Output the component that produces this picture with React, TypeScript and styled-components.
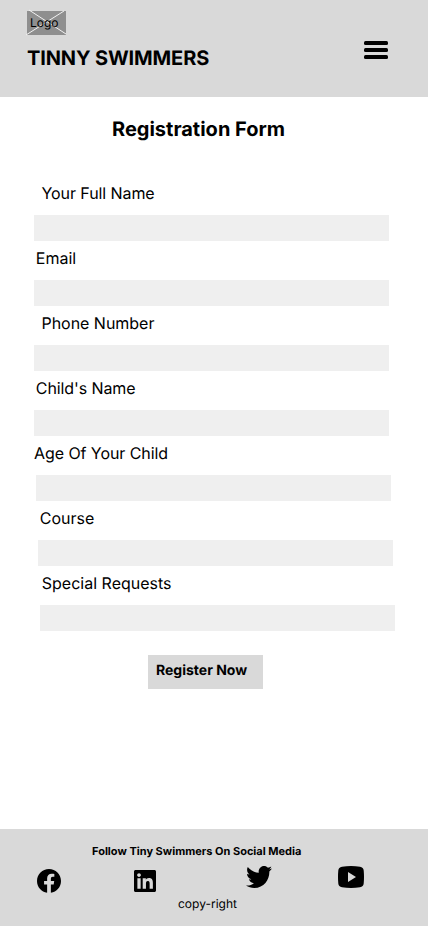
import React from "react";
import styled, { createGlobalStyle } from "styled-components";
import { FaFacebook, FaLinkedin, FaTwitter } from "react-icons/fa";

const GlobalStyle = createGlobalStyle`
  * { box-sizing: border-box; }
  body {
    margin: 0;
    background: #fff;
    color: #000;
    font-family: Inter, sans-serif;
    text-rendering: geometricPrecision;
  }
  h1, h2, p { margin: 0; }
`;

const Page = styled.div`
  width: 428px;
  height: 926px;
  display: flex;
  flex-direction: column;
  overflow: hidden;
`;

const Header = styled.header`
  height: 97px;
  flex: none;
  display: flex;
  justify-content: space-between;
  padding: 11px 40px 0 27px;
  background: #d9d9d9;
`;

const Logo = styled.div`
  position: relative;
  width: 39px;
  height: 24px;
  padding: 4px 0 0 3px;
  background: #8f8f8f;
  font-size: 12px;
  line-height: 15px;
`;

const Cross = styled.svg`
  position: absolute;
  left: -1px;
  top: -2px;
  overflow: visible;
`;

const LogoText = styled.span`
  position: relative;
`;

const Brand = styled.h1`
  margin-top: 11px;
  font-size: 20px;
  line-height: 24px;
  font-weight: 700;
  letter-spacing: -0.13px;
  white-space: nowrap;
`;

const MenuButton = styled.button`
  width: 24px;
  height: 18px;
  margin-top: 30px;
  padding: 0;
  border: 0;
  background: none;
  display: flex;
  flex-direction: column;
  justify-content: space-between;
`;

const MenuLine = styled.span`
  width: 24px;
  height: 4px;
  border-radius: 1.5px;
  background: #000;
`;

const Form = styled.form`
  flex: 1;
  display: flex;
  flex-direction: column;
  align-items: flex-start;
`;

const Title = styled.h2`
  margin: 20px 0 43px 112px;
  font-size: 20px;
  line-height: 24px;
  font-weight: 700;
`;

const Field = styled.label`
  height: 65px;
  display: flex;
  flex-direction: column;
`;

const Label = styled.span<{ $indent: number; $tracking?: number }>`
  height: 31px;
  padding-left: ${(p) => p.$indent}px;
  font-size: 16px;
  line-height: 19px;
  letter-spacing: ${(p) => p.$tracking ?? 0}px;
`;

const Input = styled.input<{ $indent: number }>`
  width: 355px;
  height: 26px;
  margin-left: ${(p) => p.$indent}px;
  padding: 0 8px;
  border: 0;
  background: #efefef;
  font: inherit;
`;

const Submit = styled.button`
  width: 115px;
  height: 34px;
  margin: 16px 0 0 148px;
  padding: 0 0 4px 8px;
  border: 0;
  background: #d9d9d9;
  color: #000;
  font: 700 14px/17px Inter, sans-serif;
  text-align: left;
  text-rendering: inherit;
`;

const Footer = styled.footer`
  height: 97px;
  flex: none;
  padding-top: 16px;
  background: #d9d9d9;
`;

const Follow = styled.p`
  padding-left: 92px;
  font-size: 11px;
  line-height: 13px;
  font-weight: 700;
`;

const Socials = styled.nav`
  height: 38px;
  display: flex;
  align-items: flex-start;
  padding: 8px 0 0 37px;
`;

const Social = styled.a<{ $gap: number; $drop: number }>`
  display: flex;
  margin: ${(p) => p.$drop}px ${(p) => p.$gap}px 0 0;
  color: #000;
`;

const Twitter = styled(FaTwitter)`
  width: 26px;
  height: 22px;
`;

const Copyright = styled.p`
  padding-left: 178px;
  font-size: 12px;
  line-height: 15px;
`;

const fields = [
  { label: "Your Full Name", labelX: 41.5, inputX: 34, tracking: -0.08 },
  { label: "Email", labelX: 35.8, inputX: 34 },
  { label: "Phone Number", labelX: 41.5, inputX: 34, tracking: -0.03 },
  { label: "Child's Name", labelX: 35.8, inputX: 34, tracking: -0.09 },
  { label: "Age Of Your Child", labelX: 34, inputX: 36, tracking: -0.07 },
  { label: "Course", labelX: 39.8, inputX: 38 },
  { label: "Special Requests", labelX: 41.8, inputX: 40 },
];

export default function App() {
  return (
    <Page>
      <GlobalStyle />
      <Header>
        <div>
          <Logo>
            <Cross width="41" height="27" stroke="#f2f2f2" strokeWidth="1">
              <path d="M3 1 40 25M0 26 38 2" />
            </Cross>
            <LogoText>Logo</LogoText>
          </Logo>
          <Brand>TINNY SWIMMERS</Brand>
        </div>
        <MenuButton aria-label="Menu">
          <MenuLine />
          <MenuLine />
          <MenuLine />
        </MenuButton>
      </Header>
      <Form>
        <Title>Registration Form</Title>
        {fields.map((f) => (
          <Field key={f.label}>
            <Label $indent={f.labelX} $tracking={f.tracking}>
              {f.label}
            </Label>
            <Input $indent={f.inputX} />
          </Field>
        ))}
        <Submit type="button">Register Now</Submit>
      </Form>
      <Footer>
        <Follow>Follow Tiny Swimmers On Social Media</Follow>
        <Socials>
          <Social $gap={73} $drop={3} aria-label="Facebook">
            <FaFacebook size={24} viewBox="8 8 496 496" />
          </Social>
          <Social $gap={90} $drop={4} aria-label="LinkedIn">
            <FaLinkedin size={22} viewBox="0 32 448 448" />
          </Social>
          <Social $gap={66} $drop={0} aria-label="Twitter">
            <Twitter viewBox="0 48 512 416" preserveAspectRatio="none" />
          </Social>
          <Social $gap={0} $drop={0} aria-label="YouTube">
            <svg width="26" height="22" viewBox="0 0 26 22">
              <path
                fillRule="evenodd"
                d="M4 .8Q13-.8 22 .8Q25.4 1.4 25.7 4.5Q26.3 11 25.7 17.5Q25.4 20.6 22 21.2Q13 22.8 4 21.2Q.6 20.6.3 17.5Q-.3 11 .3 4.5Q.6 1.4 4 .8ZM10 6V16L18 11Z"
              />
            </svg>
          </Social>
        </Socials>
        <Copyright>copy-right</Copyright>
      </Footer>
    </Page>
  );
}
